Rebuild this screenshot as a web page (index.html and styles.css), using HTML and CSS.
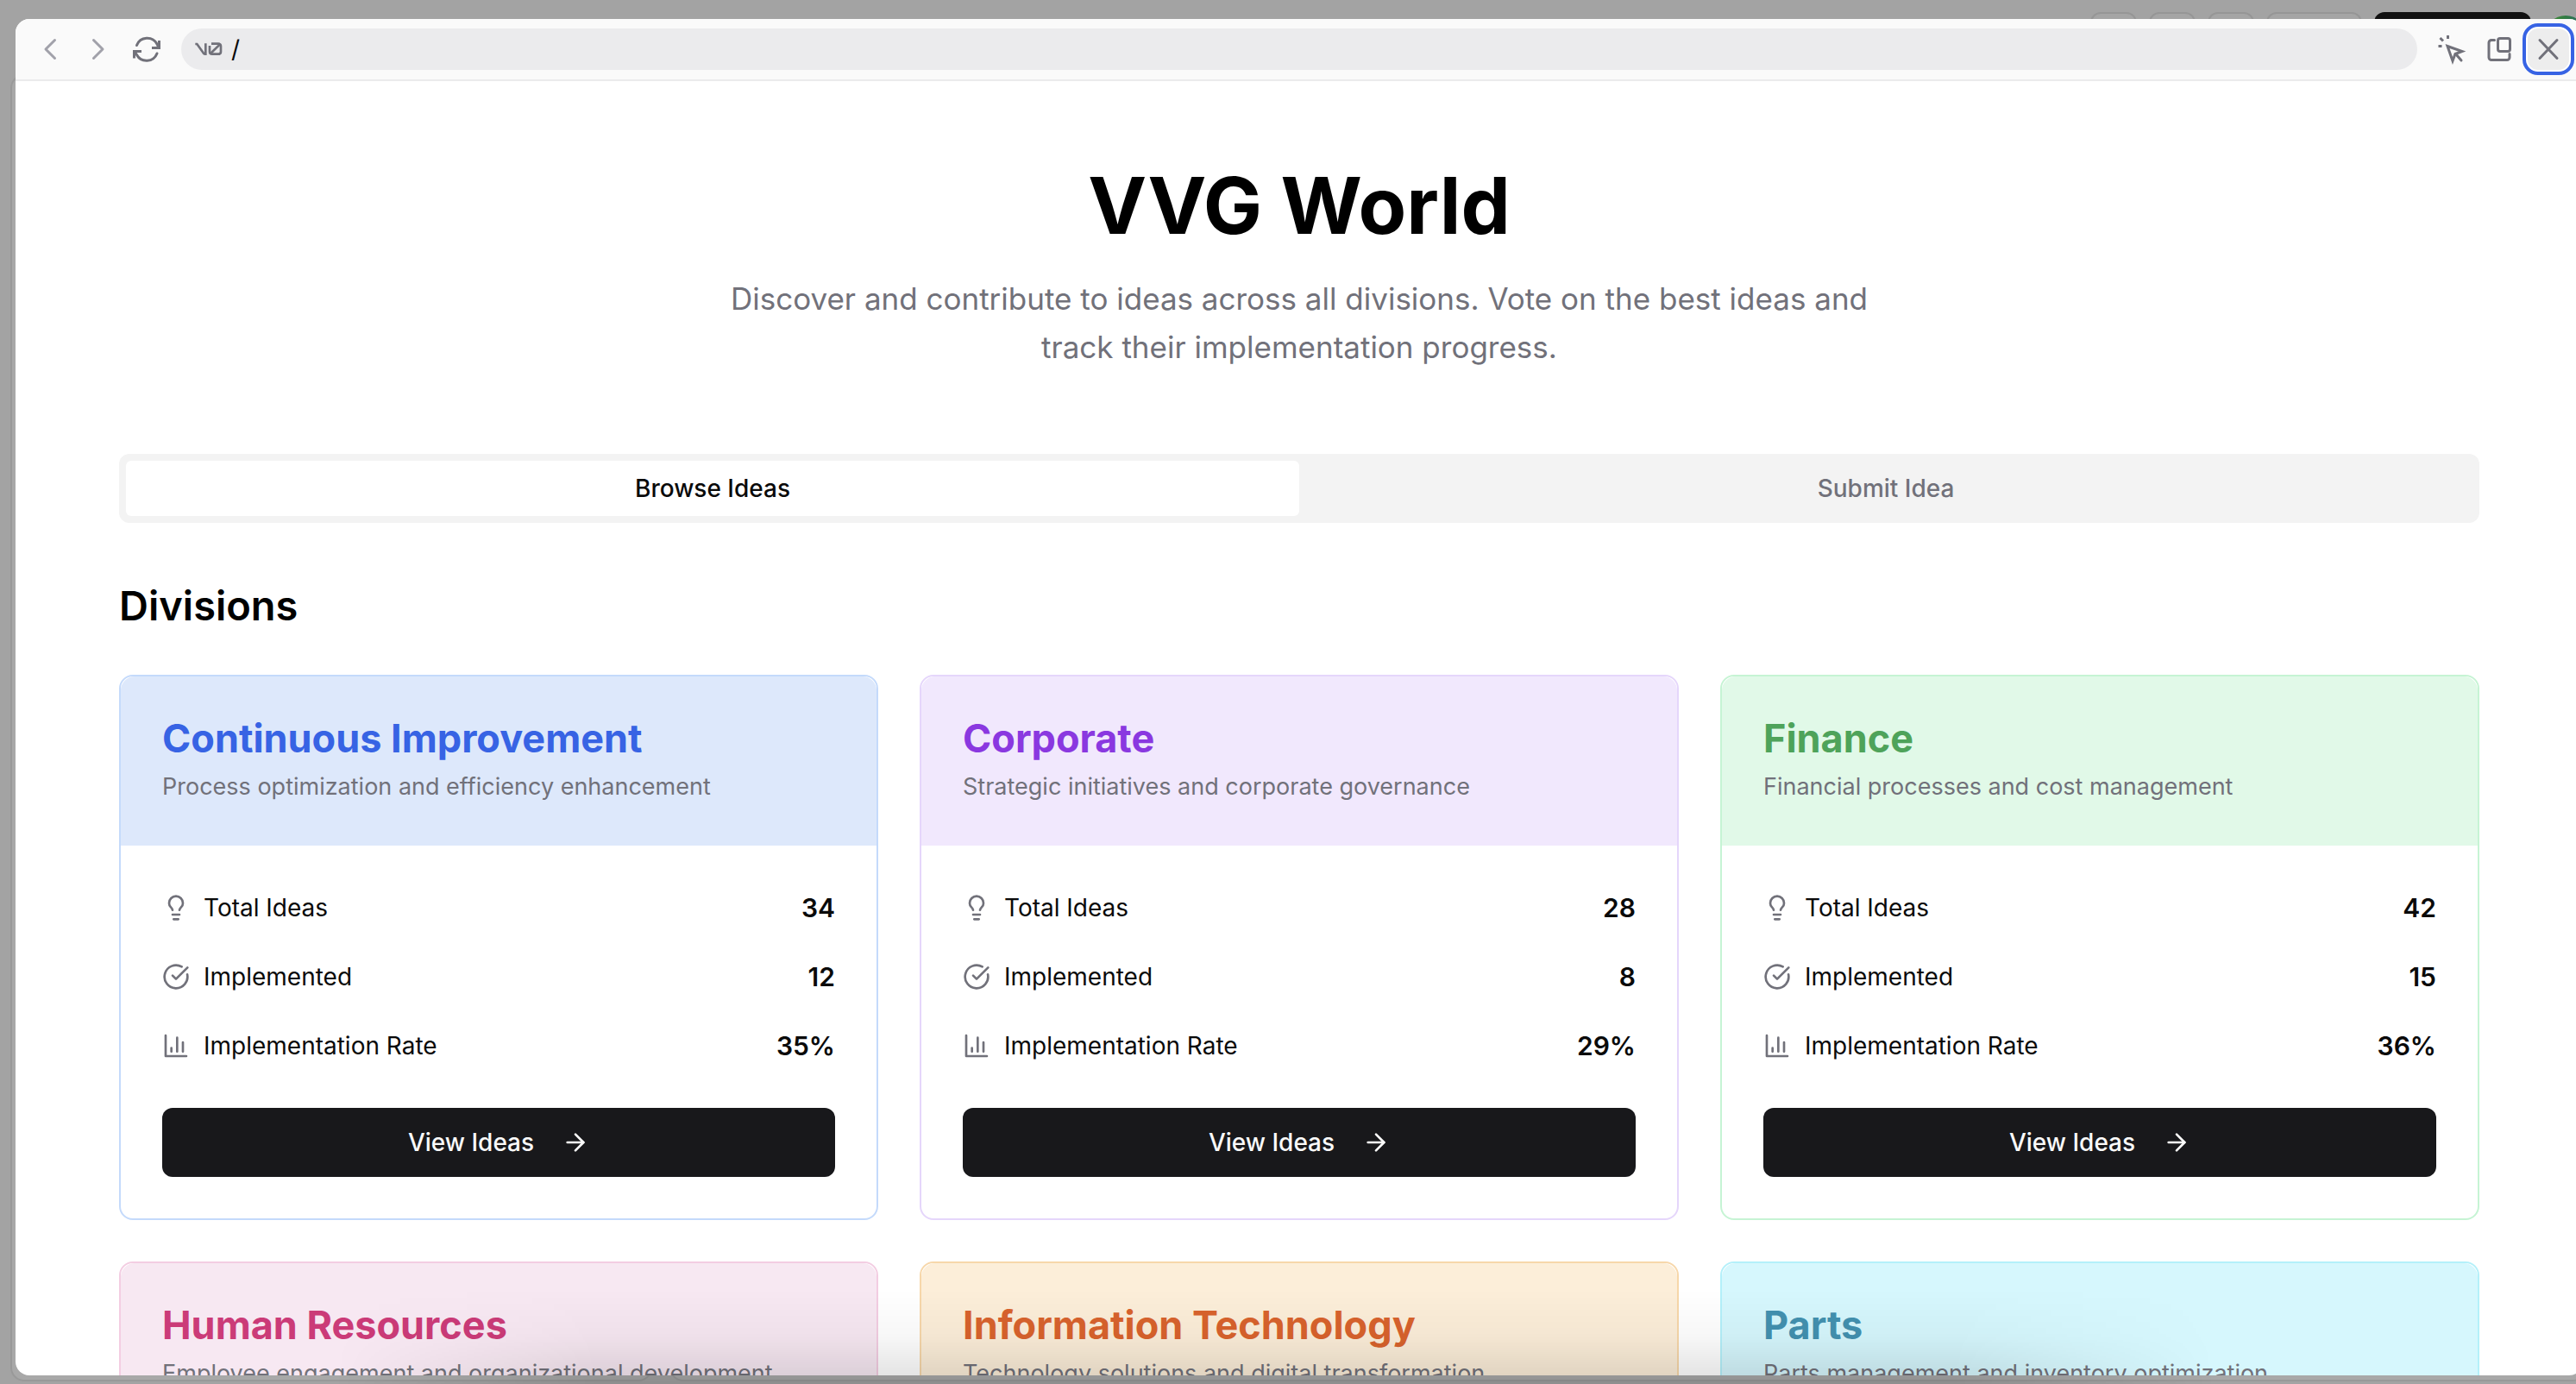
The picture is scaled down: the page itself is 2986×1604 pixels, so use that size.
FILE: index.html
```html
<!DOCTYPE html>
<html lang="en">
<head>
<meta charset="utf-8">
<title>VVG World</title>
<link rel="stylesheet" href="styles.css">
</head>
<body>
<svg class="sprite" aria-hidden="true">
  <symbol id="bulb" viewBox="0 0 24 24"><path d="M15 14c.2-1 .7-1.7 1.5-2.5 1-.9 1.5-2.2 1.5-3.5A6 6 0 0 0 6 8c0 1 .2 2.2 1.5 3.5.7.7 1.3 1.5 1.5 2.5"/><path d="M9 18h6"/><path d="M10 22h4"/></symbol>
  <symbol id="check" viewBox="0 0 24 24"><path d="M21.801 10A10 10 0 1 1 17 3.335"/><path d="m9 11 3 3L22 4"/></symbol>
  <symbol id="chart" viewBox="0 0 24 24"><path d="M3 3v18h18"/><path d="M18 17V9"/><path d="M13 17V5"/><path d="M8 17v-3"/></symbol>
  <symbol id="arrow" viewBox="0 0 24 24"><path d="M5 12h14"/><path d="m12 5 7 7-7 7"/></symbol>
</svg>

<div class="backdrop" aria-hidden="true">
  <div class="backdrop-bar">
    <div class="backdrop-actions">
      <span class="ghost"></span><span class="ghost"></span><span class="ghost"></span><span class="ghost ghost-wide"></span><span class="ghost ghost-solid"></span>
    </div>
    <span class="avatar"></span>
  </div>
  <div class="backdrop-panels">
    <div class="panel panel-chat"></div>
    <div class="panel panel-preview"></div>
  </div>
</div>

<div class="window">
  <header class="toolbar">
    <nav class="tools" aria-label="History">
      <button class="tool tool-muted" aria-label="Back"><svg class="glyph" viewBox="0 0 48 48"><path d="M29.500 13.500 19 24l10.500 10.500"/></svg></button>
      <button class="tool tool-muted" aria-label="Forward"><svg class="glyph" viewBox="0 0 48 48"><path d="M18.500 13.500 29 24 18.500 34.500"/></svg></button>
      <button class="tool" aria-label="Reload"><svg class="glyph" viewBox="0 0 48 48"><path d="M12.500 19.500a13 13 0 0 1 23.500-1.500l2 4"/><path class="square" d="M38.500 14v8.500h-8.500"/><path d="M36 29a13 13 0 0 1-23.500 1.500L10 26.500"/><path class="square" d="M9.500 34.500V26.500h8.500"/></svg></button>
    </nav>
    <div class="address">
      <svg class="logo" viewBox="0 0 96 48" aria-label="v0" role="img"><path d="M1 6h6L29 37q3 4 8 4V4"/><path d="M57 5h24q9 0 9 9v18q0 9-9 9H60q-9 0-9-9V12"/><path d="M54 39 87 7"/></svg>
      <input class="address-input" type="text" value="/" aria-label="Page path">
    </div>
    <div class="tools">
      <button class="tool" aria-label="Select element"><svg class="glyph" viewBox="0 0 48 48"><path class="square" d="M19 20.500 36 26.500l-8 3-3 8z"/><path d="m29 30 6 7"/><path class="square" d="M19.500 8v4M8.500 20.500h4M10.500 11l3.500 3.500"/></svg></button>
      <button class="tool" aria-label="Open in new window"><svg class="glyph" viewBox="0 0 48 48"><path d="M17.500 13.500H14a3 3 0 0 0-3 3V33.500a3 3 0 0 0 3 3h18a3 3 0 0 0 3-3V29.500"/><rect x="21.500" y="11.500" width="14" height="15" rx="2.500"/></svg></button>
      <button class="tool tool-focus" aria-label="Close"><svg class="glyph" viewBox="0 0 48 48"><path d="m14 13.500 20 21M34 13.500l-20 21"/></svg></button>
    </div>
  </header>

  <main class="page">
    <section class="hero">
      <h1 class="hero-title">VVG World</h1>
      <p class="hero-text">Discover and contribute to ideas across all divisions. Vote on the best ideas and track their implementation progress.</p>
    </section>

    <div class="tabs" role="tablist">
      <button class="tab tab-active" role="tab" aria-selected="true">Browse Ideas</button>
      <button class="tab" role="tab" aria-selected="false">Submit Idea</button>
    </div>

    <h2 class="section-title">Divisions</h2>

    <div class="cards">
      <article class="card blue">
        <header class="card-head"><h3 class="card-title">Continuous Improvement</h3><p class="card-text">Process optimization and efficiency enhancement</p></header>
        <div class="card-body">
          <dl class="stats">
            <div class="stat"><dt class="label"><svg class="icon"><use href="#bulb"/></svg>Total Ideas</dt><dd class="value">34</dd></div>
            <div class="stat"><dt class="label"><svg class="icon"><use href="#check"/></svg>Implemented</dt><dd class="value">12</dd></div>
            <div class="stat"><dt class="label"><svg class="icon"><use href="#chart"/></svg>Implementation Rate</dt><dd class="value">35%</dd></div>
          </dl>
          <button class="view">View Ideas<svg class="icon"><use href="#arrow"/></svg></button>
        </div>
      </article>
      <article class="card purple">
        <header class="card-head"><h3 class="card-title">Corporate</h3><p class="card-text">Strategic initiatives and corporate governance</p></header>
        <div class="card-body">
          <dl class="stats">
            <div class="stat"><dt class="label"><svg class="icon"><use href="#bulb"/></svg>Total Ideas</dt><dd class="value">28</dd></div>
            <div class="stat"><dt class="label"><svg class="icon"><use href="#check"/></svg>Implemented</dt><dd class="value">8</dd></div>
            <div class="stat"><dt class="label"><svg class="icon"><use href="#chart"/></svg>Implementation Rate</dt><dd class="value">29%</dd></div>
          </dl>
          <button class="view">View Ideas<svg class="icon"><use href="#arrow"/></svg></button>
        </div>
      </article>
      <article class="card green">
        <header class="card-head"><h3 class="card-title">Finance</h3><p class="card-text">Financial processes and cost management</p></header>
        <div class="card-body">
          <dl class="stats">
            <div class="stat"><dt class="label"><svg class="icon"><use href="#bulb"/></svg>Total Ideas</dt><dd class="value">42</dd></div>
            <div class="stat"><dt class="label"><svg class="icon"><use href="#check"/></svg>Implemented</dt><dd class="value">15</dd></div>
            <div class="stat"><dt class="label"><svg class="icon"><use href="#chart"/></svg>Implementation Rate</dt><dd class="value">36%</dd></div>
          </dl>
          <button class="view">View Ideas<svg class="icon"><use href="#arrow"/></svg></button>
        </div>
      </article>
      <article class="card pink">
        <header class="card-head"><h3 class="card-title">Human Resources</h3><p class="card-text">Employee engagement and organizational development</p></header>
      </article>
      <article class="card orange">
        <header class="card-head"><h3 class="card-title">Information Technology</h3><p class="card-text">Technology solutions and digital transformation</p></header>
      </article>
      <article class="card cyan">
        <header class="card-head"><h3 class="card-title">Parts</h3><p class="card-text">Parts management and inventory optimization</p></header>
      </article>
    </div>
  </main>
</div>
<div class="shade" aria-hidden="true"></div>
</body>
</html>
```
FILE: styles.css
```css
*, *::before, *::after { box-sizing: border-box; }

body {
  position: relative;
  display: flex;
  height: 100vh;
  margin: 0;
  padding: 22px 0 10px 18px;
  overflow: hidden;
  background: #a3a3a3;
  color: #0a0a0a;
  font-family: Inter, "Liberation Sans", sans-serif;
  font-size: 28px;
}

h1, h2, h3, p, dl, dd { margin: 0; }

button, input {
  border: 0;
  padding: 0;
  background: none;
  color: inherit;
  font: inherit;
}

.sprite {
  position: absolute;
  width: 0;
  height: 0;
}

/* Dimmed application behind the window */
.backdrop {
  position: absolute;
  inset: 0;
  display: flex;
  flex-direction: column;
  padding: 14px 0 3px 12px;
  overflow: hidden;
}

.backdrop-bar {
  display: flex;
  align-items: center;
  justify-content: flex-end;
  gap: 16px;
  margin-right: -12px;
  padding-bottom: 16px;
}

.backdrop-actions {
  display: flex;
  gap: 14px;
}

.ghost {
  width: 54px;
  height: 56px;
  border: 2px solid #969696;
  border-radius: 12px;
  background: #a5a5a5;
}

.ghost-wide { width: 111px; }

.ghost-solid {
  width: 182px;
  border: 0;
  background: #111;
}

.avatar {
  width: 48px;
  height: 48px;
  border-radius: 50%;
  background: linear-gradient(90deg, #3f9229, #256462);
}

.backdrop-panels {
  display: flex;
  flex: 1;
  gap: 20px;
  margin-right: -12px;
}

.panel {
  border: 2px solid #999;
  border-radius: 16px;
  background: #a8a8a8;
}

.panel-chat { flex: 1; }
.panel-preview { flex: 3; }

/* Preview window */
.window {
  position: relative;
  display: flex;
  flex: 1;
  flex-direction: column;
  margin-right: -8px;
  overflow: hidden;
  border-radius: 16px;
  background: #fff;
}

.toolbar {
  display: flex;
  flex: none;
  align-items: center;
  gap: 16px;
  height: 72px;
  padding: 0 16px;
  border-bottom: 2px solid #ebebec;
  background: #fafafa;
}

.tools {
  display: flex;
  gap: 8px;
}

.tool {
  width: 48px;
  height: 48px;
  border-radius: 12px;
  color: #71717a;
}

.tool-muted { color: #a1a1aa; }

.tool-focus {
  background: #ededed;
  box-shadow: 0 0 0 2px #fff;
  outline: 4px solid #3763e4;
  outline-offset: 2px;
}

.glyph {
  display: block;
  width: 48px;
  height: 48px;
  fill: none;
  stroke: currentColor;
  stroke-width: 3px;
  stroke-linecap: round;
  stroke-linejoin: round;
}

.square {
  stroke-linecap: butt;
  stroke-linejoin: miter;
}

.address {
  display: flex;
  flex: 1;
  align-items: center;
  gap: 10px;
  height: 48px;
  padding: 0 16px;
  border-radius: 24px;
  background: #ebebed;
}

.logo {
  width: 32px;
  height: 16px;
  fill: none;
  stroke: #71717a;
  stroke-width: 8px;
}

.address-input {
  flex: 1;
  outline: 0;
}

.page {
  flex: 1;
  padding: 96px 120px 0;
  overflow: hidden;
}

.hero {
  display: flex;
  flex-direction: column;
  align-items: center;
  gap: 32px;
  text-align: center;
}

.hero-title {
  color: #000;
  font-size: 91px;
  line-height: 96px;
}

.hero-text {
  max-width: 1344px;
  color: #71717a;
  font-size: 35px;
  line-height: 56px;
}

.tabs {
  display: grid;
  grid-template-columns: 1fr 1fr;
  height: 80px;
  margin-top: 96px;
  padding: 8px;
  border-radius: 12px;
  background: #f3f3f3;
}

.tab {
  border-radius: 6px;
  color: #71717a;
  font-weight: 500;
}

.tab-active {
  background: #fff;
  color: #0a0a0a;
}

.section-title {
  margin: 64px 0 48px;
  color: #000;
  font-size: 47px;
  font-weight: 600;
  line-height: 64px;
}

.cards {
  display: grid;
  grid-template-columns: repeat(3, 1fr);
  gap: 48px;
}

.card {
  border: 2px solid var(--line);
  border-radius: 16px;
}

.card-head {
  display: flex;
  flex-direction: column;
  gap: 12px;
  padding: 48px;
  border-radius: 16px 16px 0 0;
  background: var(--fill);
}

.card-title {
  color: var(--ink);
  font-size: 45px;
  line-height: 48px;
}

.card-text {
  color: #71717a;
  font-size: 27px;
  line-height: 40px;
}

.card-body {
  display: flex;
  flex-direction: column;
  gap: 48px;
  padding: 48px;
}

.stats {
  display: flex;
  flex-direction: column;
  gap: 32px;
}

.stat {
  display: flex;
  align-items: center;
  justify-content: space-between;
  line-height: 48px;
}

.label {
  display: flex;
  align-items: center;
  gap: 16px;
}

.value {
  font-size: 30px;
  font-weight: 600;
}

.icon {
  width: 32px;
  height: 32px;
  fill: none;
  stroke: currentColor;
  stroke-width: 2px;
  stroke-linecap: round;
  stroke-linejoin: round;
}

.label .icon { color: #71717a; }

.view {
  display: flex;
  align-items: center;
  justify-content: center;
  gap: 32px;
  height: 80px;
  border-radius: 12px;
  background: #18181b;
  color: #fafafa;
  font-weight: 500;
}

.blue { --fill: #dde8fb; --line: #c4dafb; --ink: #3763e4; }
.purple { --fill: #f1e8fd; --line: #e5d6fb; --ink: #8a38e0; }
.green { --fill: #e1f9e8; --line: #c6f4d4; --ink: #4ea35a; }
.pink { --fill: #f7e8f2; --line: #f3cde2; --ink: #cb3b78; }
.orange { --fill: #fceed9; --line: #f7d7aa; --ink: #d9632d; }
.cyan { --fill: #d6f7fd; --line: #b4f0fa; --ink: #4391b0; }

/* Soft shadow rising from the bottom edge of the screen */
.shade {
  position: absolute;
  right: 14%;
  bottom: 0;
  left: 13%;
  height: 110px;
  background: linear-gradient(to top, rgba(0, 0, 0, 0.12), rgba(0, 0, 0, 0.03) 50%, transparent);
  -webkit-mask-image: linear-gradient(to right, transparent, #000 14%, #000 86%, transparent);
  mask-image: linear-gradient(to right, transparent, #000 14%, #000 86%, transparent);
  pointer-events: none;
}
```
